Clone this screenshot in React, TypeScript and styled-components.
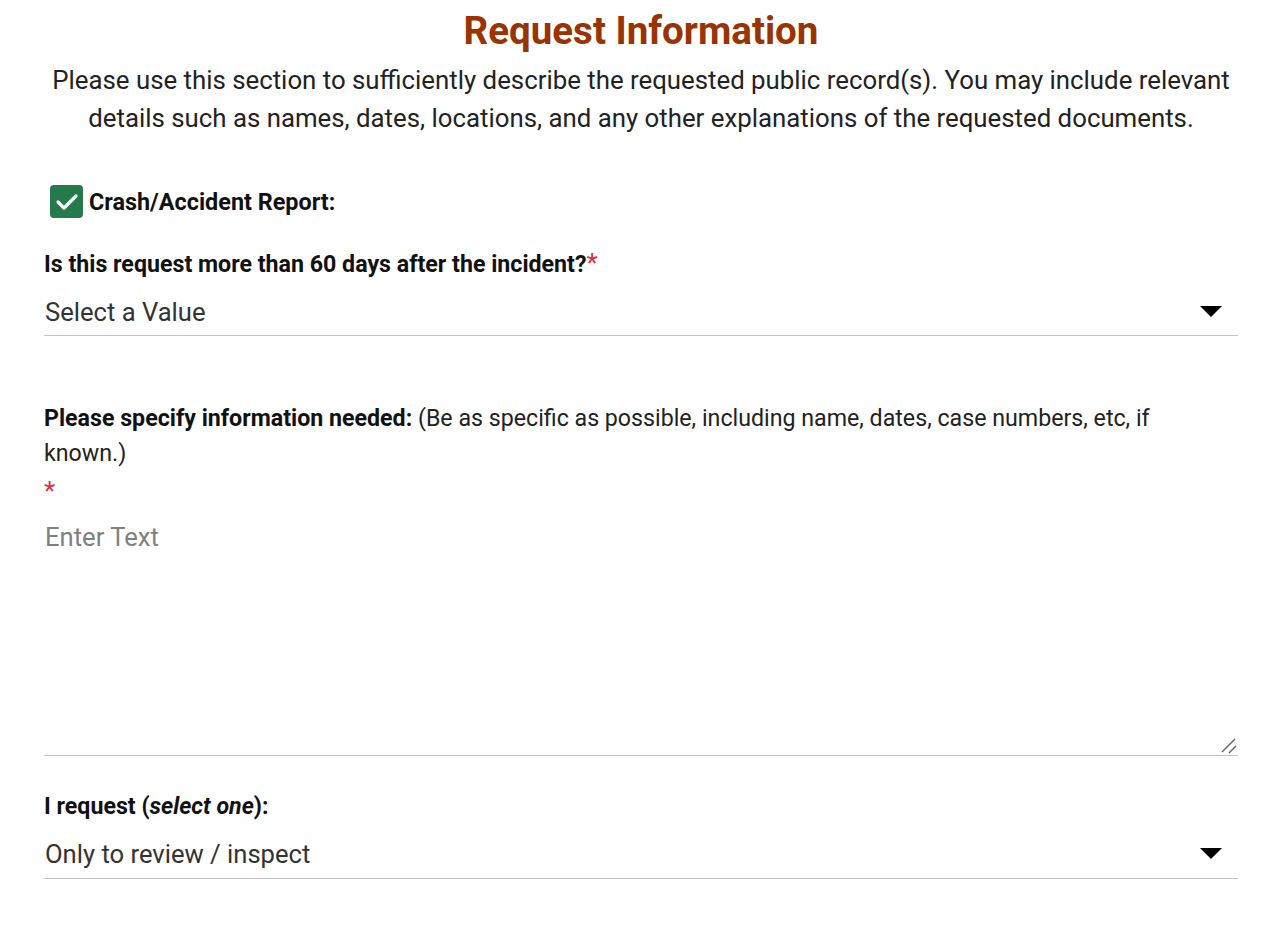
import React from "react";
import styled, { createGlobalStyle } from "styled-components";

const Global = createGlobalStyle`
  html, body { margin: 0; padding: 0; background: #fff; }
  body { font-family: Roboto, "Noto Sans", Arial, sans-serif; color: #1f1f1f; }
  * { box-sizing: border-box; }
`;

const Page = styled.div`
  width: 1280px;
  padding: 8px 42px 40px 44px;
  display: flex;
  flex-direction: column;
`;

const Title = styled.h1`
  margin: 0;
  text-align: center;
  font-size: 38.5px;
  font-weight: 700;
  line-height: 46px;
  color: #993300;
`;

const Intro = styled.p`
  margin: 7px 0 0;
  text-align: center;
  font-size: 25.8px;
  line-height: 38px;
  color: #222;
`;

const CheckRow = styled.div`
  display: flex;
  align-items: center;
  gap: 6px;
  margin-top: 48px;
  padding-left: 6px;
`;

const Box = styled.span`
  width: 33px;
  height: 33px;
  border-radius: 4px;
  background: #247a4b;
  display: flex;
  align-items: center;
  justify-content: center;
`;

const CheckLabel = styled.span`
  font-size: 23.4px;
  font-weight: 700;
  color: #111;
`;

const Field = styled.div<{ $top: number }>`
  margin-top: ${(p) => p.$top}px;
  display: flex;
  flex-direction: column;
`;

const Label = styled.div`
  font-size: 23.2px;
  font-weight: 700;
  line-height: 35px;
  color: #111;
  padding-right: 20px;
`;

const Note = styled.span`
  font-weight: 400;
  color: #222;
`;

const Req = styled.span`
  color: #e0303a;
  font-weight: 400;
  font-size: 26px;
`;

const ReqLine = styled.div`
  color: #e0303a;
  font-size: 26px;
  line-height: 40px;
`;

const SelectBox = styled.div<{ $h: number }>`
  display: flex;
  align-items: center;
  justify-content: space-between;
  height: ${(p) => p.$h}px;
  padding: 6px 16px 0 1px;
  border-bottom: 1px solid #c4c4c4;
  font-size: 25.6px;
  color: #333;
`;

const AreaWrap = styled.div`
  position: relative;
  margin-top: 4px;
`;

const Area = styled.textarea`
  display: block;
  width: 100%;
  height: 241px;
  padding: 6px 1px;
  border: none;
  border-bottom: 1px solid #c4c4c4;
  outline: none;
  resize: none;
  font-family: Roboto, "Noto Sans", Arial, sans-serif;
  font-size: 25.6px;
  line-height: 32px;
  color: #333;
  &::placeholder { color: #808080; }
`;

const Grip = styled.svg`
  position: absolute;
  right: 1px;
  bottom: 2px;
  pointer-events: none;
`;

const Arrow = () => (
  <svg width="22" height="12" viewBox="0 0 22 12">
    <polygon points="0,0 22,0 11,11" fill="#000" />
  </svg>
);

export default function App() {
  return (
    <Page>
      <Global />
      <Title>Request Information</Title>
      <Intro>
        Please use this section to sufficiently describe the requested public record(s). You may include relevant
        details such as names, dates, locations, and any other explanations of the requested documents.
      </Intro>
      <CheckRow>
        <Box>
          <svg width="24" height="20" viewBox="0 0 24 20">
            <polyline points="3,10 9,16 21,4" fill="none" stroke="#fff" strokeWidth="3.2" strokeLinecap="round" strokeLinejoin="round" />
          </svg>
        </Box>
        <CheckLabel>Crash/Accident Report:</CheckLabel>
      </CheckRow>
      <Field $top={28}>
        <Label>
          Is this request more than 60 days after the incident?<Req>*</Req>
        </Label>
        <SelectBox $h={54}>
          <span>Select a Value</span>
          <Arrow />
        </SelectBox>
      </Field>
      <Field $top={65}>
        <Label>
          Please specify information needed: <Note>(Be as specific as possible, including name, dates, case numbers, etc, if known.)</Note>
        </Label>
        <ReqLine>*</ReqLine>
        <AreaWrap>
          <Area placeholder="Enter Text" />
          <Grip width="16" height="16" viewBox="0 0 16 16">
            <line x1="14" y1="1" x2="1" y2="14" stroke="#666" strokeWidth="1.5" />
            <line x1="15" y1="8" x2="8" y2="15" stroke="#666" strokeWidth="1.5" />
          </Grip>
        </AreaWrap>
      </Field>
      <Field $top={33}>
        <Label>
          I request (<i>select one</i>):
        </Label>
        <SelectBox $h={55}>
          <span>Only to review / inspect</span>
          <Arrow />
        </SelectBox>
      </Field>
    </Page>
  );
}
